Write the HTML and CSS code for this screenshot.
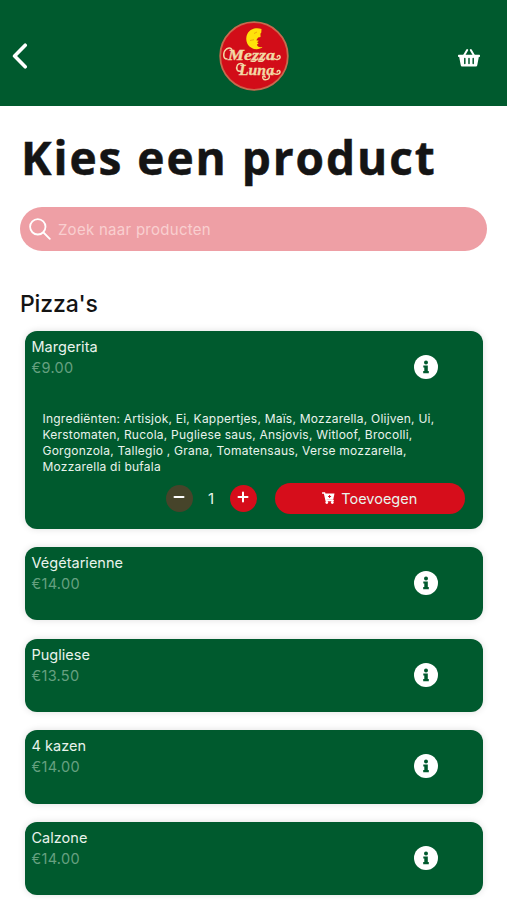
FILE: index.html
```html
<!DOCTYPE html>
<html lang="nl">
<head>
<meta charset="utf-8">
<meta name="viewport" content="width=device-width, initial-scale=1">
<title>Mezza Luna</title>
<link rel="stylesheet" href="styles.css">
</head>
<body>
<svg width="0" height="0" class="defs" aria-hidden="true">
  <symbol id="info" viewBox="0 0 24 24">
    <circle cx="12" cy="12" r="12" fill="#fff"/>
    <circle cx="12" cy="7.4" r="2" fill="#005a2e"/>
    <path d="M9.300 10.400h4.500v5.600h1v2.200H9.200V16h1.100v-3.400h-1z" fill="#005a2e"/>
  </symbol>
</svg>
<header class="header">
  <svg class="back" viewBox="0 0 16 26"><path d="M13.200 2.200 2.600 13l10.600 10.800" fill="none" stroke="#fff" stroke-width="3.600" stroke-linecap="round" stroke-linejoin="round"/></svg>
  <svg class="logo" viewBox="0 0 70 70">
    <circle cx="35" cy="35" r="33.800" fill="#d20d18" stroke="#c9694e" stroke-width="1.800"/>
    <path d="M42.500 8C35 5.500 27.800 9.600 27.300 17c-.5 6.300 4.300 10.700 9.600 11.200 2.800.2 5-.7 6.600-2.200-3.500.5-5.500-.5-5.500-2.500l1.600-1-1.500-1.200 1.800-1.500-2.600-.6 1.800-2.600 2.500-.6-.2-3.200.9-1.300z" fill="#ffe20a"/>
    <path d="M35 12.500l3-1.500M31 19.500l4-.8" stroke="#e9a10d" stroke-width=".9"/>
    <g class="lettering" fill="#f3d9a6" stroke="#f3d9a6" stroke-width=".3">
      <text x="9" y="38.500" font-size="14" textLength="47" lengthAdjust="spacingAndGlyphs">Mezza</text>
      <text x="20" y="54" font-size="14" textLength="35" lengthAdjust="spacingAndGlyphs">Luna</text>
    </g>
    <g fill="none" stroke="#f3d9a6" stroke-width="1.500" stroke-linecap="round">
      <path d="M8 38c-4.500 0-4-7.500-.5-10 2.500-1.500 4.500-1 5.300.3"/>
      <path d="M36 38c2 1.500 0 3-4 2M43.500 38c2 1.500 0 3-4 2"/>
      <path d="M55 37.500c2 1.800 7 .8 6-2-.6-1.700-3-.8-2.700.4"/>
      <path d="M23 50c-5 1.500-6.500-2.500-4.500-6 1.800-2.300 5-1.800 6-.2"/>
      <path d="M54 52c2.500 2 7 1.500 7-1.300-.2-2-3-1.400-2.800.2M50 54c2 4.500-4.500 6-6 3.300-1-2.500 1.500-2.800 2.200-1.200"/>
    </g>
  </svg>
  <svg class="basket" viewBox="0 0 24 20">
    <path d="M7 7.500 10.200 2M17 7.500 13.800 2" stroke="#fff" stroke-width="2" stroke-linecap="round"/>
    <path d="M1.700 6.800h20.600c1 0 1 2.300 0 2.300h-.5l-1.500 8c-.2 1-.8 1.500-1.700 1.500H5.400c-.9 0-1.500-.5-1.700-1.500l-1.500-8h-.5c-1 0-1-2.300 0-2.300z" fill="#fff"/>
    <path d="M7.800 10.500v5M12 10.500v5M16.200 10.500v5" stroke="#005a2e" stroke-width="1.500" stroke-linecap="round"/>
  </svg>
</header>
<main class="main">
  <h1 class="title">Kies een product</h1>
  <div class="search">
    <svg class="glass" viewBox="0 0 22 22"><circle cx="8.800" cy="8.800" r="7.700"/><path d="m14.500 14.500 6.300 6.300"/></svg>
    <span>Zoek naar producten</span>
  </div>
  <h2 class="category">Pizza's</h2>
  <div class="list">
    <article class="card open">
      <div class="top">
        <div><div class="name">Margerita</div><div class="price">€9.00</div></div>
        <svg class="info"><use href="#info"/></svg>
      </div>
      <p class="ingredients">Ingrediënten: Artisjok, Ei, Kappertjes, Maïs, Mozzarella, Olijven, Ui,<br>Kerstomaten, Rucola, Pugliese saus, Ansjovis, Witloof, Brocolli,<br>Gorgonzola, Tallegio , Grana, Tomatensaus, Verse mozzarella,<br>Mozzarella di bufala</p>
      <div class="actions">
        <span class="round minus"><svg viewBox="0 0 12 12"><path d="M1.500 6h9"/></svg></span>
        <span class="count">1</span>
        <span class="round"><svg viewBox="0 0 12 12"><path d="M1.500 6h9M6 1.500v9"/></svg></span>
        <span class="add">
          <svg class="cart" viewBox="0 0 13 12"><path d="M.6 1h1.900l1.700 7.600h7" fill="none" stroke="#fff" stroke-width="1.500" stroke-linecap="round"/><path d="M2.700 1.500H12.500L11.200 7.800H4z" fill="#fff"/><circle cx="4.800" cy="10.500" r="1.400" fill="#fff"/><circle cx="10.300" cy="10.500" r="1.400" fill="#fff"/><path d="M7.600 3v3M6.100 4.500h3" stroke="#d60d1b" stroke-width="1"/></svg>
          <span>Toevoegen</span>
        </span>
      </div>
    </article>
    <article class="card"><div class="top"><div><div class="name">Végétarienne</div><div class="price">€14.00</div></div><svg class="info"><use href="#info"/></svg></div></article>
    <article class="card"><div class="top"><div><div class="name">Pugliese</div><div class="price">€13.50</div></div><svg class="info"><use href="#info"/></svg></div></article>
    <article class="card"><div class="top"><div><div class="name">4 kazen</div><div class="price">€14.00</div></div><svg class="info"><use href="#info"/></svg></div></article>
    <article class="card"><div class="top"><div><div class="name">Calzone</div><div class="price">€14.00</div></div><svg class="info"><use href="#info"/></svg></div></article>
  </div>
</main>
</body>
</html>
```
FILE: styles.css
```css
* { box-sizing: border-box; }
body { margin: 0; height: 900px; overflow: hidden; background: #fff; font-family: Inter, "Liberation Sans", sans-serif; }
svg { display: block; flex: none; }
.defs { display: none; }
.header { height: 105.600px; background: #005a2e; display: grid; grid-template-columns: 1fr 70px 1fr; align-items: center; padding: 7px 26px 0 12px; }
.back { width: 16px; height: 26px; }
.logo { width: 70px; height: 70px; margin-left: 7px; }
.lettering { font-family: "Liberation Serif", serif; font-style: italic; font-weight: 700; }
.basket { width: 24px; height: 20px; justify-self: end; margin-top: 4px; }
.main { padding: 0 20px; }
.title { margin: 19.900px 0 0; padding-left: 1px; height: 82px; font: 700 46px/64px "Open Sans", "Noto Sans", sans-serif; letter-spacing: 1.950px; color: #141414; -webkit-text-stroke: .5px #141414; white-space: nowrap; }
.search { height: 43.500px; width: 467px; margin-left: .4px; border-radius: 22px; background: #ee9fa5; display: flex; align-items: center; padding-left: 8.500px; gap: 7px; font-size: 15px; letter-spacing: .28px; color: #f9cfd0; }
.glass { width: 22px; height: 22px; fill: none; stroke: #fff; stroke-width: 1.800; stroke-linecap: round; }
.category { margin: 37.200px 0 0; height: 42.700px; font-size: 23px; line-height: 32px; font-weight: 500; letter-spacing: -.15px; color: #141414; }
.list { padding: 0 5px; display: grid; gap: 18.200px; }
.card { width: 457.500px; height: 73.500px; border-radius: 12px; background: #005a2e; box-shadow: 0 0 7px rgba(0, 0, 0, .13); color: #e9f3ec; }
.card.open { height: 197.800px; }
.top { display: flex; justify-content: space-between; align-items: flex-start; padding: 5px 44.500px 0 6.500px; height: 74px; }
.name { font-size: 14.500px; line-height: 21px; letter-spacing: .02px; }
.price { font-size: 14.500px; line-height: 21px; letter-spacing: .3px; color: #66a080; }
.info { width: 24px; height: 24px; margin-top: 19px; }
.ingredients { margin: 6px 0 0 17.500px; font-size: 12px; line-height: 15.900px; letter-spacing: .23px; white-space: nowrap; }
.actions { display: flex; align-items: center; padding: 8.400px 17.500px 0 0; justify-content: flex-end; }
.round { width: 27px; height: 27px; border-radius: 50%; background: #d60d1b; display: grid; place-items: center; padding-bottom: 2px; }
.round svg { width: 12px; height: 12px; stroke: #fff; stroke-width: 2; stroke-linecap: round; }
.minus { background: #46442a; }
.count { width: 37px; text-align: center; font-size: 15px; }
.add { width: 190.500px; height: 31px; margin-left: 18px; border-radius: 16px; background: #d60d1b; display: flex; align-items: center; justify-content: center; gap: 6px; font-size: 14.500px; letter-spacing: 0; }
.cart { width: 13px; height: 12px; }
```
